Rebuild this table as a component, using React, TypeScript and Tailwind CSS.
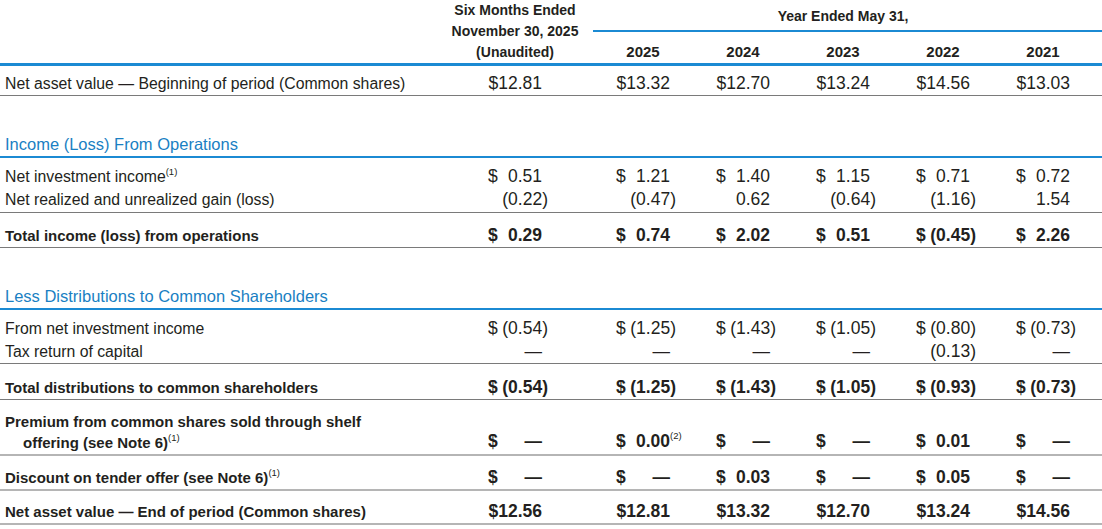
import clsx from "clsx";

const COLS = "grid grid-cols-[437px_156px_repeat(5,100px)]";

function Val({ v, bold }: { v: string; bold?: boolean }) {
  let dollar = false;
  let body = v;
  let sup: string | undefined;
  if (body.startsWith("$ ")) {
    dollar = true;
    body = body.slice(2);
  }
  if (body.includes("^")) [body, sup] = body.split("^");
  const neg = body.endsWith(")");
  return (
    <div className={clsx("flex h-[23px] justify-center text-[17.5px] leading-[23px]", bold && "font-bold")}>
      <div className="flex w-[54px] justify-between">
        <span>{dollar ? "$" : ""}</span>
        <span className="relative whitespace-nowrap">
          {neg ? (
            <>
              {body.slice(0, -1)}
              <span className="-mr-[6px]">)</span>
            </>
          ) : (
            body
          )}
          {sup && (
            <span className="absolute left-full top-[1px] text-[9.5px] font-normal leading-none">
              ({sup})
            </span>
          )}
        </span>
      </div>
    </div>
  );
}

function Sup({ n }: { n: number }) {
  return <sup className="-top-[7px] text-[9.5px] font-normal">({n})</sup>;
}

type RowProps = {
  label: React.ReactNode;
  vals: string[];
  bold?: boolean;
  className?: string;
};

function Row({ label, vals, bold, className }: RowProps) {
  return (
    <div className={clsx(COLS, "items-center", className)}>
      <div
        className={clsx(
          "h-[23px] pl-[5px]",
          bold ? "text-[15px] font-bold leading-[24px]" : "text-[15.8px] leading-[24px]"
        )}
      >
        {label}
      </div>
      {vals.map((v, i) => (
        <Val key={i} v={v} bold={bold} />
      ))}
    </div>
  );
}

function Section({ title }: { title: string }) {
  return (
    <div className="mt-[37px] h-[25px] border-b-2 border-[#1b8ad3] pl-[5px] text-[16.5px] leading-[23px] text-[#1a7fc3]">
      {title}
    </div>
  );
}

export default function App() {
  return (
    <div className="w-[1102px] bg-white pb-[3px] font-['Liberation_Sans',Arial,sans-serif] text-[#231f20]">
      <div className="grid h-[66px] grid-cols-[437px_156px_1fr] border-b-[3px] border-[#1b8ad3]">
        <div />
        <div className="text-center text-[14px] font-bold leading-[21px]">
          Six Months Ended
          <br />
          November 30, 2025
          <br />
          (Unaudited)
        </div>
        <div className="flex flex-col">
          <div className="border-b-2 border-[#1b8ad3] pb-[3px] pt-[6px]">
            <div className="w-[500px] text-center text-[14px] font-bold leading-[21px]">Year Ended May 31,</div>
          </div>
          <div className="mt-[9px] grid grid-cols-[repeat(5,100px)] text-center text-[15px] font-bold leading-[21px]">
            <div>2025</div>
            <div>2024</div>
            <div>2023</div>
            <div>2022</div>
            <div>2021</div>
          </div>
        </div>
      </div>

      <Row
        className="border-b border-[#7a7a7a] pt-[6px]"
        label="Net asset value — Beginning of period (Common shares)"
        vals={["$12.81", "$13.32", "$12.70", "$13.24", "$14.56", "$13.03"]}
      />

      <Section title="Income (Loss) From Operations" />
      <Row
        className="pt-[7px]"
        label={
          <>
            Net investment income
            <Sup n={1} />
          </>
        }
        vals={["$ 0.51", "$ 1.21", "$ 1.40", "$ 1.15", "$ 0.71", "$ 0.72"]}
      />
      <Row
        className="border-b border-[#7a7a7a] pb-[1px]"
        label="Net realized and unrealized gain (loss)"
        vals={["(0.22)", "(0.47)", "0.62", "(0.64)", "(1.16)", "1.54"]}
      />
      <Row
        bold
        className="border-b border-[#7a7a7a] pt-[11px]"
        label="Total income (loss) from operations"
        vals={["$ 0.29", "$ 0.74", "$ 2.02", "$ 0.51", "$ (0.45)", "$ 2.26"]}
      />

      <Section title="Less Distributions to Common Shareholders" />
      <Row
        className="pt-[7px]"
        label="From net investment income"
        vals={["$ (0.54)", "$ (1.25)", "$ (1.43)", "$ (1.05)", "$ (0.80)", "$ (0.73)"]}
      />
      <Row
        className="border-b border-[#7a7a7a]"
        label="Tax return of capital"
        vals={["—", "—", "—", "—", "(0.13)", "—"]}
      />
      <Row
        bold
        className="border-b border-[#7a7a7a] pt-[12px]"
        label="Total distributions to common shareholders"
        vals={["$ (0.54)", "$ (1.25)", "$ (1.43)", "$ (1.05)", "$ (0.93)", "$ (0.73)"]}
      />

      <div className={clsx(COLS, "items-end border-b-2 border-[#b5b5b5] pb-[1px] pt-[11px]")}>
        <div className="pl-[5px] text-[15px] font-bold leading-[21px]">
          Premium from common shares sold through shelf
          <br />
          <span className="pl-[18px]">
            offering (see Note 6)
            <Sup n={1} />
          </span>
        </div>
        {["$ —", "$ 0.00^2", "$ —", "$ —", "$ 0.01", "$ —"].map((v, i) => (
          <Val key={i} v={v} bold />
        ))}
      </div>
      <Row
        bold
        className="border-b-2 border-[#b5b5b5] pt-[10px]"
        label={
          <>
            Discount on tender offer (see Note 6)
            <Sup n={1} />
          </>
        }
        vals={["$ —", "$ —", "$ 0.03", "$ —", "$ 0.05", "$ —"]}
      />
      <Row
        bold
        className="border-b-2 border-[#b5b5b5] pt-[9px]"
        label="Net asset value — End of period (Common shares)"
        vals={["$12.56", "$12.81", "$13.32", "$12.70", "$13.24", "$14.56"]}
      />
    </div>
  );
}
